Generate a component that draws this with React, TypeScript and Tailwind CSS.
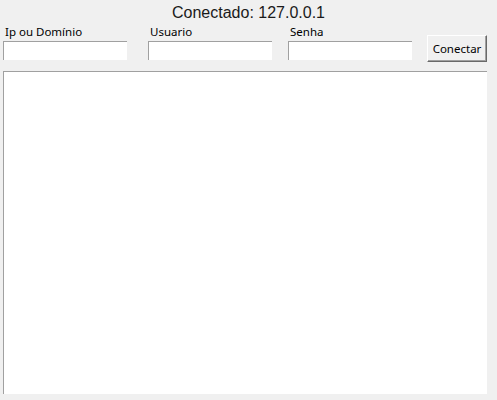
import React from 'react';

const Field: React.FC<{ label: string; className?: string; type?: string }> = ({ label, className = '', type = 'text' }) => (
  <div className={`flex flex-col w-[124px] ${className}`}>
    <span className="h-[16px] pl-[2px] text-[11.5px] leading-[16px] text-black">{label}</span>
    <input
      type={type}
      className="mt-[1px] h-[19px] w-full bg-white border-t border-l border-[#a0a0a0] outline-none"
    />
  </div>
);

const App: React.FC = () => {
  return (
    <div
      className="w-[497px] h-[400px] bg-[#f0f0f0] overflow-hidden flex flex-col"
      style={{ fontFamily: '"Noto Sans", "DejaVu Sans", sans-serif' }}
    >
      {/* Status */}
      <div
        className="h-[24px] pt-[4px] text-center text-[16px] leading-[18px] text-[#1a1a1a]"
        style={{ fontFamily: '"Liberation Sans", Arial, sans-serif' }}
      >
        Conectado: 127.0.0.1
      </div>

      {/* Login row */}
      <div className="flex items-start h-[40px] pl-[3px]">
        <Field label="Ip ou Domínio" />
        <Field label="Usuario" className="ml-[21px]" />
        <Field label="Senha" type="password" className="ml-[16px]" />
        <button className="ml-[15px] mt-[11px] h-[27px] w-[60px] bg-[#f0f0f0] border-t border-l border-white border-r border-b border-r-[#696969] border-b-[#696969] shadow-[inset_-1px_-1px_0_#a0a0a0] text-[11.5px] text-black">
          Conectar
        </button>
      </div>

      {/* Output */}
      <div className="mt-[7px] ml-[3px] w-[484px] h-[323px] bg-white border-t border-l border-[#a0a0a0]" />
    </div>
  );
};

export default App;
